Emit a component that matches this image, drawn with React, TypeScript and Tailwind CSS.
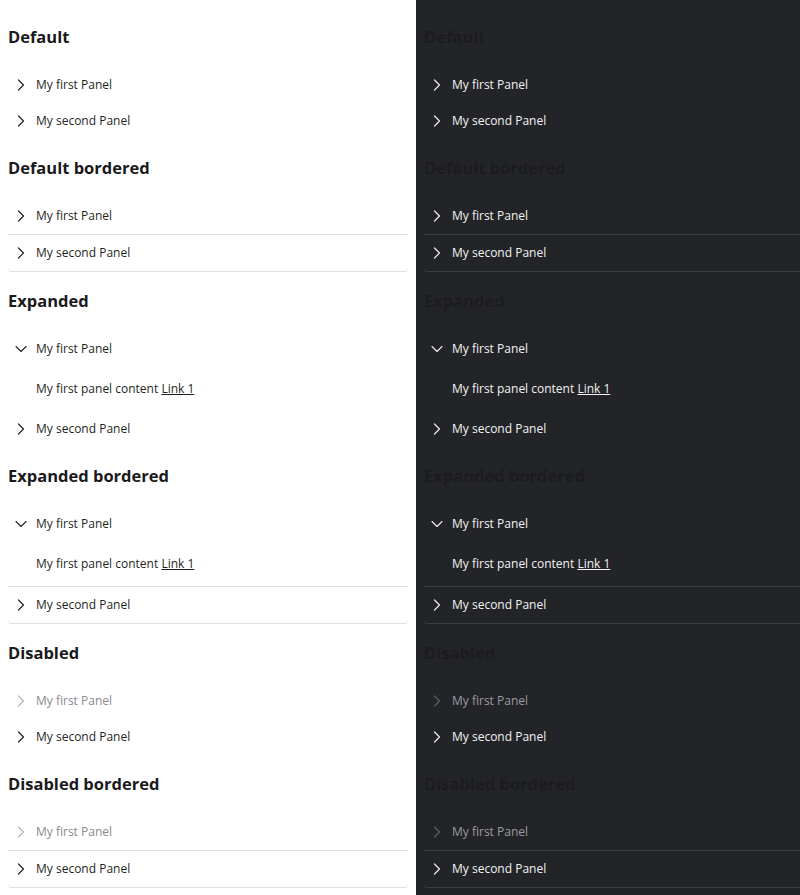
import { ChevronRight, ChevronDown } from 'lucide-react';

type Panel = { title: string; open?: boolean; disabled?: boolean };

type Variant = { title: string; bordered?: boolean; panels: Panel[] };

const variants: Variant[] = [
  { title: 'Default', panels: [{ title: 'My first Panel' }, { title: 'My second Panel' }] },
  {
    title: 'Default bordered',
    bordered: true,
    panels: [{ title: 'My first Panel' }, { title: 'My second Panel' }],
  },
  {
    title: 'Expanded',
    panels: [{ title: 'My first Panel', open: true }, { title: 'My second Panel' }],
  },
  {
    title: 'Expanded bordered',
    bordered: true,
    panels: [{ title: 'My first Panel', open: true }, { title: 'My second Panel' }],
  },
  {
    title: 'Disabled',
    panels: [{ title: 'My first Panel', disabled: true }, { title: 'My second Panel' }],
  },
  {
    title: 'Disabled bordered',
    bordered: true,
    panels: [{ title: 'My first Panel', disabled: true }, { title: 'My second Panel' }],
  },
];

const AccordionItem = ({
  panel,
  bordered,
  dark,
}: {
  panel: Panel;
  bordered?: boolean;
  dark?: boolean;
}) => {
  const textColor = panel.disabled
    ? dark
      ? 'text-[#9a9ba0]'
      : 'text-[#8a8a8f]'
    : dark
      ? 'text-[#f2f2f4]'
      : 'text-[#1f1f22]';
  const iconColor = panel.disabled
    ? dark
      ? 'text-[#5d5e63]'
      : 'text-[#b8b8bd]'
    : dark
      ? 'text-[#e8e8ea]'
      : 'text-[#2a2a2e]';
  const border = bordered
    ? dark
      ? 'border-b border-[#3b3c41] last:rounded-b-[4px]'
      : 'border-b border-[#dfdfe6] last:rounded-b-[4px]'
    : '';

  return (
    <div className={border}>
      <div className={`flex items-center h-9 pl-[3px] gap-[5px] text-[12px] leading-5 ${textColor}`}>
        <span className={`w-5 h-5 flex items-center justify-center ${iconColor}`}>
          {panel.open ? (
            <ChevronDown size={22} strokeWidth={1.4} />
          ) : (
            <ChevronRight size={20} strokeWidth={1.5} />
          )}
        </span>
        <span>{panel.title}</span>
      </div>
      {panel.open && (
        <div
          className={`pl-7 py-3 text-[12px] leading-5 ${
            dark ? 'text-[#f2f2f4]' : 'text-[#1f1f22]'
          }`}
        >
          My first panel content{' '}
          <a href="#" className="underline">
            Link 1
          </a>
        </div>
      )}
    </div>
  );
};

const Column = ({ dark }: { dark?: boolean }) => (
  <div
    className={`w-[416px] shrink-0 px-2 pt-[8px] pb-4 ${dark ? 'bg-[#232427]' : 'bg-white'}`}
  >
    {variants.map(v => (
      <div key={v.title}>
        <h2
          className={`mt-[17px] mb-[18px] text-[16.5px] leading-6 font-bold ${
            dark ? 'text-[#1b1c1e]' : 'text-[#1a1a1c]'
          }`}
        >
          {v.title}
        </h2>
        <div className="w-[400px]">
          {v.panels.map(p => (
            <AccordionItem key={p.title} panel={p} bordered={v.bordered} dark={dark} />
          ))}
        </div>
      </div>
    ))}
  </div>
);

export default function App() {
  return (
    <div
      className="flex w-[800px] h-[895px] overflow-hidden"
      style={{ fontFamily: '"Open Sans", "Noto Sans", sans-serif' }}
    >
      <Column />
      <Column dark />
    </div>
  );
}
